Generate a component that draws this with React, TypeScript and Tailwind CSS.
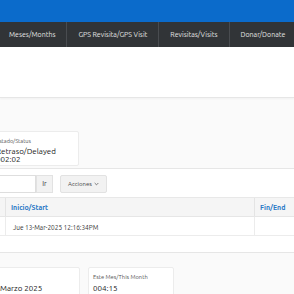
import React from "react";

const navItems = ["Meses/Months", "GPS Revisita/GPS Visit", "Revisitas/Visits", "Donar/Donate"];

export default function App() {
  return (
    <div className="w-[294px] h-[294px] overflow-hidden bg-[#fafafa] font-['Ubuntu','Noto_Sans',sans-serif] text-[#333]">
      <div className="h-[22px] bg-[#0b6bcb]" />
      <nav className="h-[25px] bg-[#313437] flex -ml-[2px] whitespace-nowrap">
        {navItems.map((t) => (
          <div
            key={t}
            className="h-full flex items-center px-[11px] border-r border-[#494c50] text-[7px] text-[#e4e4e4] shrink-0"
          >
            {t}
          </div>
        ))}
      </nav>
      <div className="h-[51px] bg-white border-b border-[#e6e6e6] shadow-[0_1px_2px_rgba(0,0,0,0.04)]" />
      <div className="pt-[33px] -ml-[9px] flex">
        <div className="w-[88px] h-[35px] bg-white border border-[#ececec] rounded-[2px] px-[4px] pt-[7px] leading-none whitespace-nowrap">
          <div className="text-[5.6px] text-[#555]">Estado/Status</div>
          <div className="text-[8px] mt-[3px] text-[#222]">Retraso/Delayed</div>
          <div className="text-[8px] mt-[0px] text-[#222]">002:02</div>
        </div>
      </div>
      <div className="mt-[2px] bg-white border-y border-[#e6e6e6] h-[85px]">
        <div className="flex items-center pt-[5px] h-[24px]">
          <div className="w-[36px] h-[18px] bg-white border border-[#dedede] border-l-0" />
          <div className="w-[17px] h-[18px] bg-[#f2f2f2] border border-[#e2e2e2] flex items-center justify-center text-[7px] text-[#333]">
            Ir
          </div>
          <div className="ml-[7px] w-[47px] h-[18px] bg-[#f2f2f2] border border-[#e2e2e2] rounded-[2px] flex items-center justify-center text-[6px] text-[#444] gap-[2px]">
            Acciones
            <svg width="5" height="4" viewBox="0 0 6 4" fill="none">
              <path d="M0.8 0.8 L3 3 L5.2 0.8" stroke="#555" strokeWidth="0.9" />
            </svg>
          </div>
        </div>
        <div className="mt-[4px] border-t border-[#e8e8e8]">
          <div className="flex h-[19px] bg-[#f5f5f5] border-b border-[#e6e6e6]">
            <div className="w-[6px] border-r border-[#e4e4e4]" />
            <div className="w-[249px] border-r border-[#e4e4e4] flex items-center pl-[5px] text-[7px] font-semibold text-[#2a78c6]">
              Inicio/Start
            </div>
            <div className="flex-1 flex items-center pl-[5px] text-[7px] font-semibold text-[#2a78c6]">Fin/End</div>
          </div>
          <div className="flex h-[19px] bg-white border-b border-[#ececec]">
            <div className="w-[6px] border-r border-[#ececec]" />
            <div className="w-[249px] border-r border-[#ececec] flex items-center pl-[7px] pt-[3px] text-[6.5px] text-[#333]">
              Jue 13-Mar-2025 12:16:34PM
            </div>
            <div className="flex-1" />
          </div>
        </div>
      </div>
      <div className="pt-[14px] -ml-[9px] flex gap-[8px]">
        <div className="w-[89px] h-[34px] bg-white border border-[#ececec] rounded-[2px] px-[4px] pt-[7px] leading-none whitespace-nowrap">
          <div className="text-[5.6px] text-[#555]">&nbsp;</div>
          <div className="text-[8px] mt-[4px] ml-[4px] text-[#222]">Marzo 2025</div>
        </div>
        <div className="w-[86px] h-[34px] bg-white border border-[#ececec] rounded-[2px] px-[4px] pt-[7px] leading-none whitespace-nowrap">
          <div className="text-[5.8px] text-[#555]">Este Mes/This Month</div>
          <div className="text-[8px] mt-[4px] text-[#222]">004:15</div>
        </div>
      </div>
    </div>
  );
}
